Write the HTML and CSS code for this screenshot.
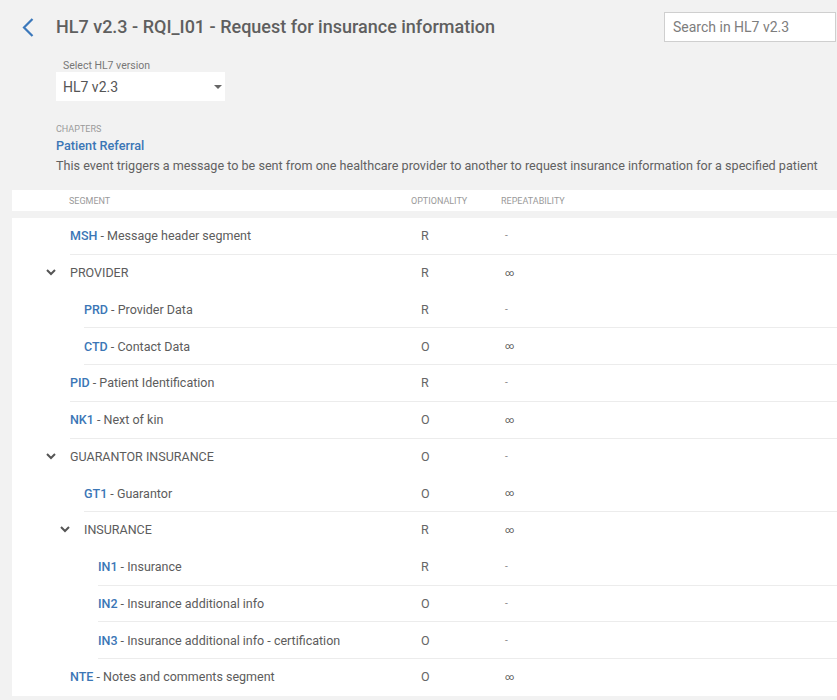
FILE: index.html
```html
<!DOCTYPE html>
<html>
<head>
<meta charset="utf-8">
<link rel="stylesheet" href="styles.css">
</head>
<body>
<header class="header">
  <a class="back" href="#"><svg width="12" height="19" viewBox="0 0 12 19"><polyline points="10.5,1 2,9.5 10.5,18" fill="none" stroke="#3b78bb" stroke-width="2.2"/></svg></a>
  <h1 class="title">HL7 v2.3 - RQI_I01 - Request for insurance information</h1>
  <div class="search">Search in HL7 v2.3</div>
</header>
<section class="version">
  <div class="version-label">Select HL7 version</div>
  <div class="select"><span>HL7 v2.3</span><span class="caret"></span></div>
</section>
<section class="chapter">
  <div class="chapter-label">CHAPTERS</div>
  <div class="chapter-name">Patient Referral</div>
  <div class="chapter-desc">This event triggers a message to be sent from one healthcare provider to another to request insurance information for a specified patient</div>
</section>
<div class="thead">
  <div class="th seg-h">SEGMENT</div>
  <div class="th opt-h">OPTIONALITY</div>
  <div class="th rep-h">REPEATABILITY</div>
</div>
<div class="tbody">
  <div class="row l0"><div class="seg"><b>MSH</b> - Message header segment</div><div class="opt">R</div><div class="rep">-</div></div>
  <div class="row l0 group"><div class="seg"><svg class="chev" width="10" height="7" viewBox="0 0 10 7"><polyline points="1,1 5,5 9,1" fill="none" stroke="#555" stroke-width="2"/></svg>PROVIDER</div><div class="opt">R</div><div class="rep inf">∞</div></div>
  <div class="row l1"><div class="seg"><b>PRD</b> - Provider Data</div><div class="opt">R</div><div class="rep">-</div></div>
  <div class="row l1"><div class="seg"><b>CTD</b> - Contact Data</div><div class="opt">O</div><div class="rep inf">∞</div></div>
  <div class="row l0"><div class="seg"><b>PID</b> - Patient Identification</div><div class="opt">R</div><div class="rep">-</div></div>
  <div class="row l0"><div class="seg"><b>NK1</b> - Next of kin</div><div class="opt">O</div><div class="rep inf">∞</div></div>
  <div class="row l0 group"><div class="seg"><svg class="chev" width="10" height="7" viewBox="0 0 10 7"><polyline points="1,1 5,5 9,1" fill="none" stroke="#555" stroke-width="2"/></svg>GUARANTOR INSURANCE</div><div class="opt">O</div><div class="rep">-</div></div>
  <div class="row l1"><div class="seg"><b>GT1</b> - Guarantor</div><div class="opt">O</div><div class="rep inf">∞</div></div>
  <div class="row l1 group"><div class="seg"><svg class="chev" width="10" height="7" viewBox="0 0 10 7"><polyline points="1,1 5,5 9,1" fill="none" stroke="#555" stroke-width="2"/></svg>INSURANCE</div><div class="opt">R</div><div class="rep inf">∞</div></div>
  <div class="row l2"><div class="seg"><b>IN1</b> - Insurance</div><div class="opt">R</div><div class="rep">-</div></div>
  <div class="row l2"><div class="seg"><b>IN2</b> - Insurance additional info</div><div class="opt">O</div><div class="rep">-</div></div>
  <div class="row l2"><div class="seg"><b>IN3</b> - Insurance additional info - certification</div><div class="opt">O</div><div class="rep">-</div></div>
  <div class="row l0 last"><div class="seg"><b>NTE</b> - Notes and comments segment</div><div class="opt">O</div><div class="rep inf">∞</div></div>
</div>
</body>
</html>
```
FILE: styles.css
```css
* { box-sizing: border-box; }
html, body { margin: 0; padding: 0; }
body {
  background: #f2f2f2;
  font-family: Roboto, "Liberation Sans", sans-serif;
  color: #5c5c5c;
  width: 837px;
  overflow: hidden;
}
.header {
  display: flex;
  align-items: center;
  height: 30px;
  margin-top: 12px;
  padding-left: 22px;
  padding-right: 1px;
}
.back { display: flex; width: 12px; margin-right: 22px; }
.title {
  flex: 1;
  margin: 0;
  font-size: 18px;
  font-weight: 500;
  color: #5f5f5f;
  line-height: 24px;
}
.search {
  width: 172px;
  height: 30px;
  border: 1px solid #cfcfcf;
  background: #fff;
  padding-left: 8px;
  font-size: 14px;
  line-height: 28px;
  color: #7d7d7d;
}
.version { margin-left: 56px; margin-top: 18px; }
.version-label {
  font-size: 10.5px;
  line-height: 12px;
  color: #777;
  padding-left: 7px;
}
.select {
  width: 169px;
  height: 29px;
  background: #fff;
  display: flex;
  align-items: center;
  justify-content: space-between;
  padding: 0 3px 0 7px;
  font-size: 14px;
  color: #555;
}
.caret {
  width: 0; height: 0;
  border-left: 4px solid transparent;
  border-right: 4px solid transparent;
  border-top: 4px solid #666;
  margin-top: 1px;
}
.chapter { margin-left: 56px; margin-top: 22px; }
.chapter-label { font-size: 9px; line-height: 12px; color: #9a9a9a; }
.chapter-name {
  margin-top: 2px;
  font-size: 12.7px;
  line-height: 18px;
  font-weight: 500;
  color: #3b76b6;
}
.chapter-desc { margin-top: 2px; font-size: 12.6px; line-height: 18px; color: #616161; white-space: nowrap; }
.thead {
  margin: 15px 0 0 12px;
  height: 21px;
  background: #fff;
  display: flex;
  align-items: center;
}
.th { font-size: 9px; color: #9a9a9a; }
.seg-h { width: 399px; padding-left: 57px; }
.opt-h { width: 90px; }
.tbody {
  margin: 7px 0 0 12px;
  background: #fff;
}
.row {
  display: flex;
  align-items: center;
  height: 36.75px;
  margin-left: var(--ind);
  border-bottom: 1px solid #ececec;
  font-size: 12.5px;
}
.l0 { --ind: 58px; }
.l1 { --ind: 72px; }
.l2 { --ind: 86px; }
.group, .last { border-bottom-color: transparent; }
.seg {
  width: calc(409px - var(--ind));
  display: flex;
  align-items: center;
  color: #5c5c5c;
  white-space: pre;
}
.seg b { font-weight: 500; color: #3b76b6; }
.chev { margin-left: -24px; margin-right: 14px; }
.opt { width: 83px; color: #666; }
.rep { color: #888; font-size: 10px; padding-left: 1px; }
.rep.inf { font-size: 9px; color: #555; }
```
